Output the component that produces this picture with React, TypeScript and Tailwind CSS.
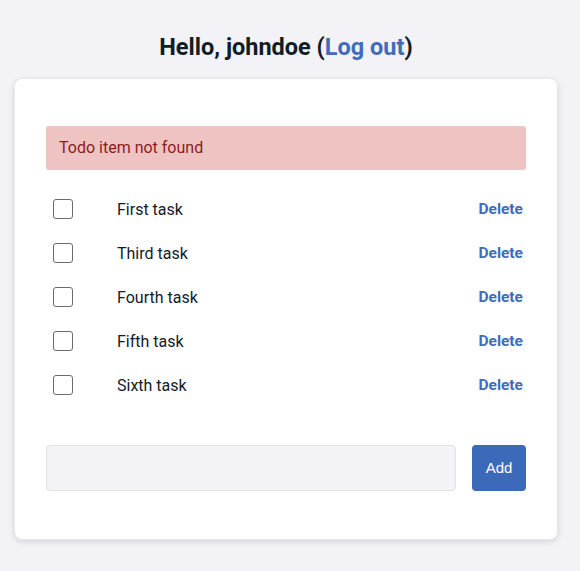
export default function App() {
  const tasks = ["First task", "Third task", "Fourth task", "Fifth task", "Sixth task"];
  return (
    <div className="min-h-[571px] w-full bg-[#f2f2f7] pt-[31px] font-['Roboto',sans-serif] text-[#111c27]">
      <div className="ml-[14px] w-[544px]">
        <h1 className="text-center text-[23.5px] font-bold leading-[32px]">
          Hello, johndoe (<a href="#" className="text-[#3f6db7]">Log out</a>)
        </h1>
        <div className="mt-[15px] rounded-[8px] border border-[#e6e6ec] bg-white px-[31px] pb-[48px] pt-[47px] shadow-[0_2px_6px_rgba(0,0,0,0.12)]">
          <div className="flex h-[44px] items-center rounded-[3px] bg-[#f0c3c3] px-[13px] text-[16px] text-[#8b1d1d]">
            Todo item not found
          </div>
          <ul className="mt-[17px]">
            {tasks.map((t) => (
              <li key={t} className="flex h-[44px] items-center pl-[7px] pr-[3px]">
                <span className="h-[20px] w-[20px] rounded-[3px] border border-[#6b6b6b] bg-white" />
                <span className="ml-[44px] flex-1 pt-[2px] text-[16px]">{t}</span>
                <a href="#" className="pt-[2px] text-[15.5px] font-bold text-[#3f6db7]">Delete</a>
              </li>
            ))}
          </ul>
          <div className="mt-[38px] flex gap-[16px]">
            <input className="h-[46px] flex-1 rounded-[4px] border border-[#e1e1e7] bg-[#f2f2f7] px-3 outline-none" />
            <button className="h-[46px] w-[54px] rounded-[4px] bg-[#3d69bb] font-['Liberation_Sans',sans-serif] text-[15px] text-white">
              Add
            </button>
          </div>
        </div>
      </div>
    </div>
  );
}
